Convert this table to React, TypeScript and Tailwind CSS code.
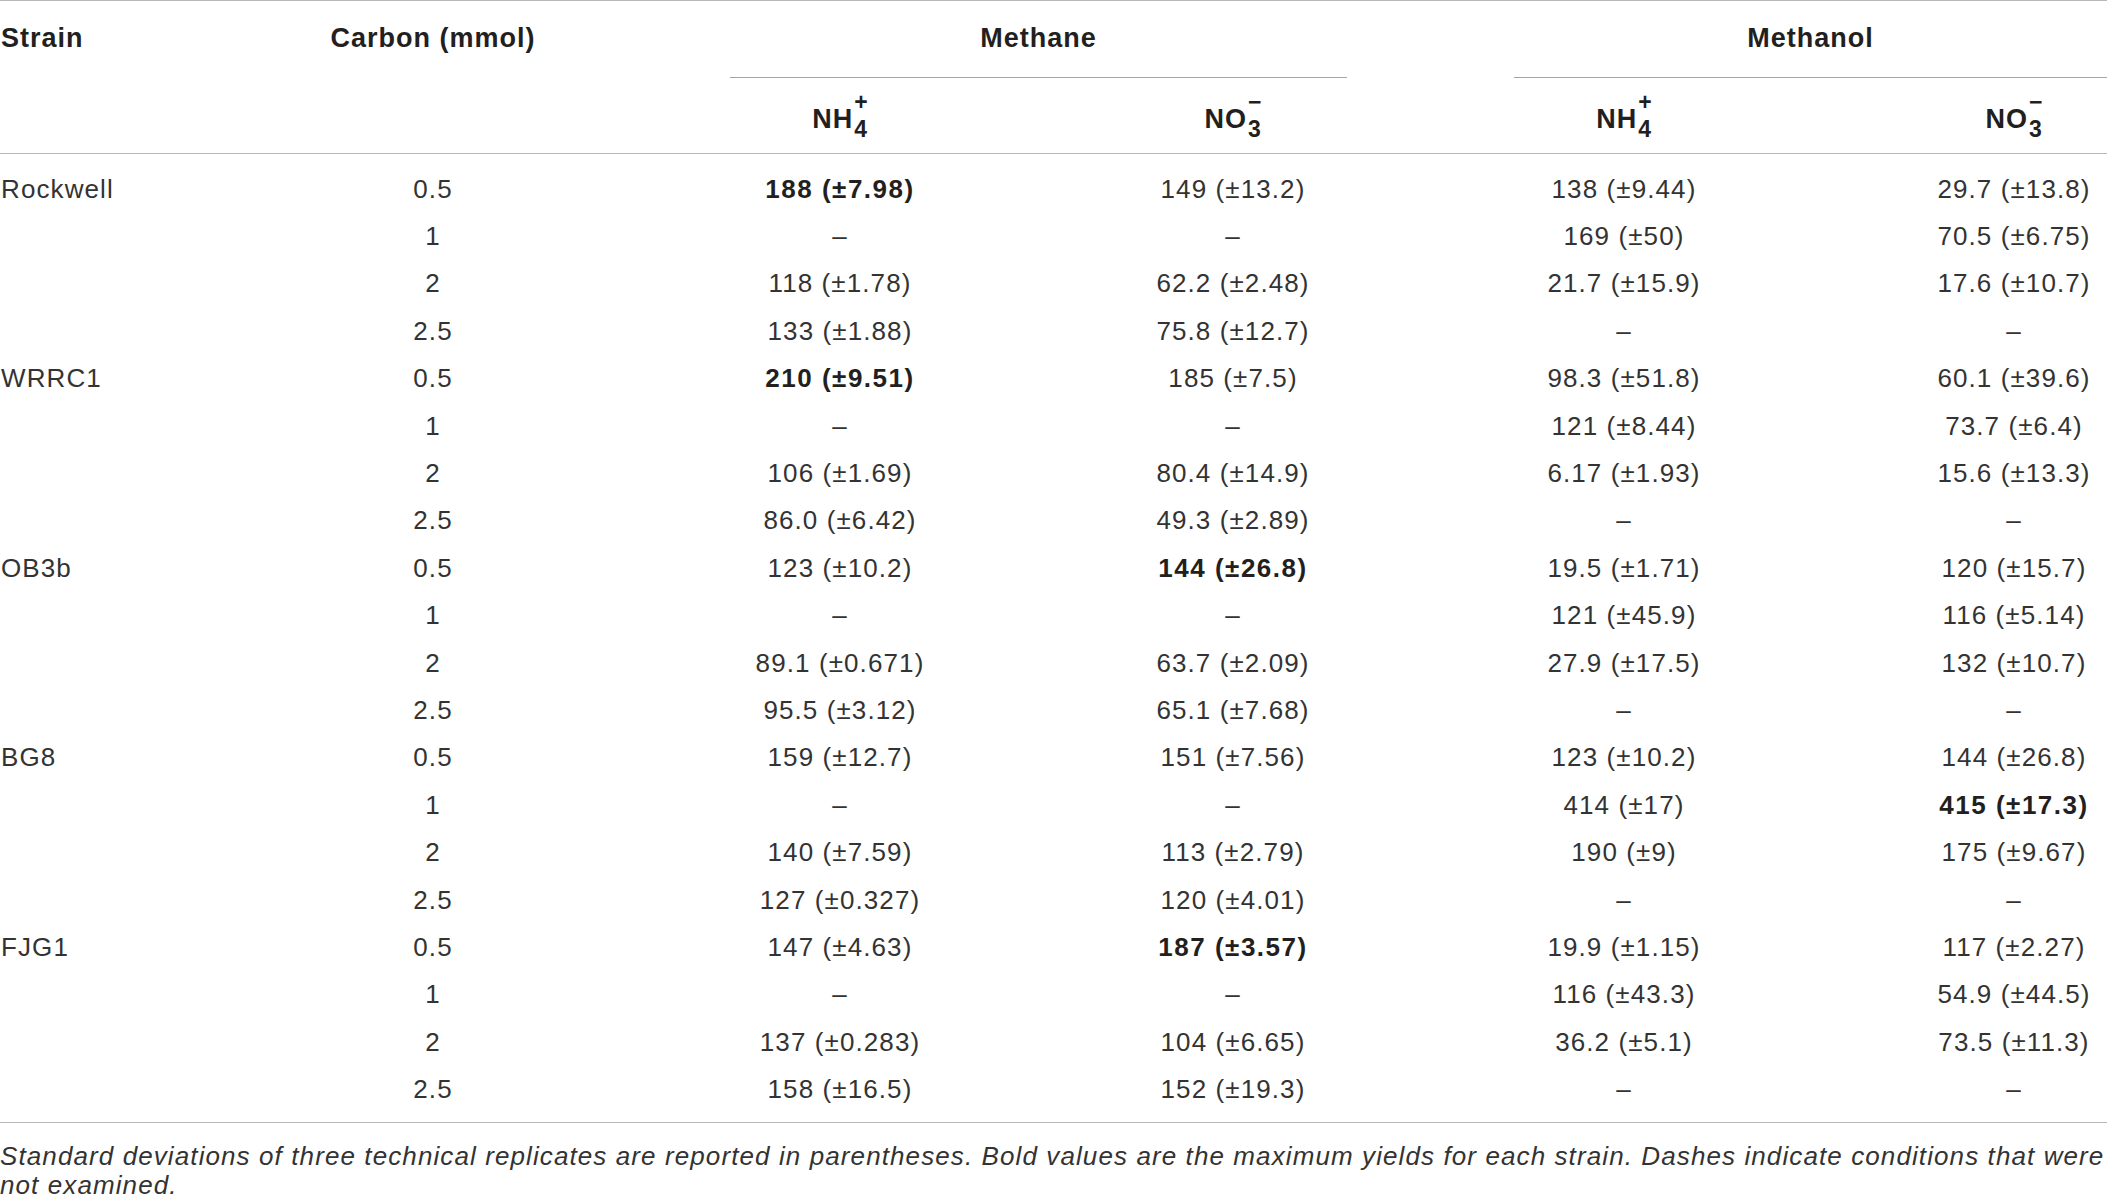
import React from 'react';

type Cell = string | { v: string; b: true };

const B = (v: string): Cell => ({ v, b: true });

const groups: { strain: string; rows: [string, Cell, Cell, Cell, Cell][] }[] = [
  {
    strain: 'Rockwell',
    rows: [
      ['0.5', B('188 (±7.98)'), '149 (±13.2)', '138 (±9.44)', '29.7 (±13.8)'],
      ['1', '–', '–', '169 (±50)', '70.5 (±6.75)'],
      ['2', '118 (±1.78)', '62.2 (±2.48)', '21.7 (±15.9)', '17.6 (±10.7)'],
      ['2.5', '133 (±1.88)', '75.8 (±12.7)', '–', '–'],
    ],
  },
  {
    strain: 'WRRC1',
    rows: [
      ['0.5', B('210 (±9.51)'), '185 (±7.5)', '98.3 (±51.8)', '60.1 (±39.6)'],
      ['1', '–', '–', '121 (±8.44)', '73.7 (±6.4)'],
      ['2', '106 (±1.69)', '80.4 (±14.9)', '6.17 (±1.93)', '15.6 (±13.3)'],
      ['2.5', '86.0 (±6.42)', '49.3 (±2.89)', '–', '–'],
    ],
  },
  {
    strain: 'OB3b',
    rows: [
      ['0.5', '123 (±10.2)', B('144 (±26.8)'), '19.5 (±1.71)', '120 (±15.7)'],
      ['1', '–', '–', '121 (±45.9)', '116 (±5.14)'],
      ['2', '89.1 (±0.671)', '63.7 (±2.09)', '27.9 (±17.5)', '132 (±10.7)'],
      ['2.5', '95.5 (±3.12)', '65.1 (±7.68)', '–', '–'],
    ],
  },
  {
    strain: 'BG8',
    rows: [
      ['0.5', '159 (±12.7)', '151 (±7.56)', '123 (±10.2)', '144 (±26.8)'],
      ['1', '–', '–', '414 (±17)', B('415 (±17.3)')],
      ['2', '140 (±7.59)', '113 (±2.79)', '190 (±9)', '175 (±9.67)'],
      ['2.5', '127 (±0.327)', '120 (±4.01)', '–', '–'],
    ],
  },
  {
    strain: 'FJG1',
    rows: [
      ['0.5', '147 (±4.63)', B('187 (±3.57)'), '19.9 (±1.15)', '117 (±2.27)'],
      ['1', '–', '–', '116 (±43.3)', '54.9 (±44.5)'],
      ['2', '137 (±0.283)', '104 (±6.65)', '36.2 (±5.1)', '73.5 (±11.3)'],
      ['2.5', '158 (±16.5)', '152 (±19.3)', '–', '–'],
    ],
  },
];

const cols = 'grid grid-cols-[235px_396px_418px_368px_414px_276px]';

function Ion({ base, sup, sub }: { base: string; sup: string; sub: string }) {
  return (
    <span className="inline-flex items-baseline">
      {base}
      <span className="relative -top-[18px] inline-flex flex-col items-start text-[23px] leading-[27px] ml-[1px] tracking-normal">
        <span>{sup}</span>
        <span>{sub}</span>
      </span>
    </span>
  );
}

function Value({ c }: { c: Cell }) {
  if (typeof c === 'string') return <span>{c}</span>;
  return <span className="font-bold tracking-[1.5px] text-[#231f20]">{c.v}</span>;
}

export default function App() {
  return (
    <div className="w-[2107px] h-[1199px] overflow-hidden bg-white font-['Liberation_Sans',Arial,sans-serif] text-[26px] text-[#333] tracking-[1.1px]">
      {/* Шапка таблицы */}
      <div className="border-t border-b border-[#b8b8b8]">
        <div className={`${cols} h-[77px] font-bold text-[27px] tracking-[1px] text-[#231f20] leading-[30px]`}>
          <div className="pt-[22px] pl-[1px]">Strain</div>
          <div className="pt-[22px] text-center">Carbon (mmol)</div>
          <div className="col-span-2 ml-[99px] mr-[70px] pt-[22px] text-center border-b border-[#a6a6a6]">
            Methane
          </div>
          <div className="col-span-2 ml-[97px] pt-[22px] text-center border-b border-[#a6a6a6]">
            Methanol
          </div>
        </div>
        <div className={`${cols} h-[75px] font-bold text-[27px] tracking-[1px] text-[#231f20] leading-[30px]`}>
          <div />
          <div />
          <div className="pt-[26px] text-center">
            <Ion base="NH" sup="+" sub="4" />
          </div>
          <div className="pt-[26px] text-center">
            <Ion base="NO" sup="−" sub="3" />
          </div>
          <div className="pt-[26px] text-center">
            <Ion base="NH" sup="+" sub="4" />
          </div>
          <div className="pt-[26px] pl-[90px] text-center">
            <Ion base="NO" sup="−" sub="3" />
          </div>
        </div>
      </div>

      {/* Данные */}
      <div className="pt-[10px] pb-[10px] border-b border-[#b8b8b8]">
        {groups.map((g) =>
          g.rows.map((r, i) => (
            <div key={g.strain + i} className={`${cols} h-[47.4px] items-center leading-[30px] pt-[2px]`}>
              <div className="pl-[1px]">{i === 0 ? g.strain : ''}</div>
              <div className="text-center">{r[0]}</div>
              <div className="text-center">
                <Value c={r[1]} />
              </div>
              <div className="text-center">
                <Value c={r[2]} />
              </div>
              <div className="text-center">
                <Value c={r[3]} />
              </div>
              <div className="pl-[90px] text-center">
                <Value c={r[4]} />
              </div>
            </div>
          ))
        )}
      </div>

      {/* Примечание */}
      <div className="pt-[19px] italic leading-[29px] text-[#333]">
        <div className="whitespace-nowrap">
          Standard deviations of three technical replicates are reported in parentheses. Bold values are the maximum
          yields for each strain. Dashes indicate conditions that were
        </div>
        <div className="whitespace-nowrap">not examined.</div>
      </div>
    </div>
  );
}
